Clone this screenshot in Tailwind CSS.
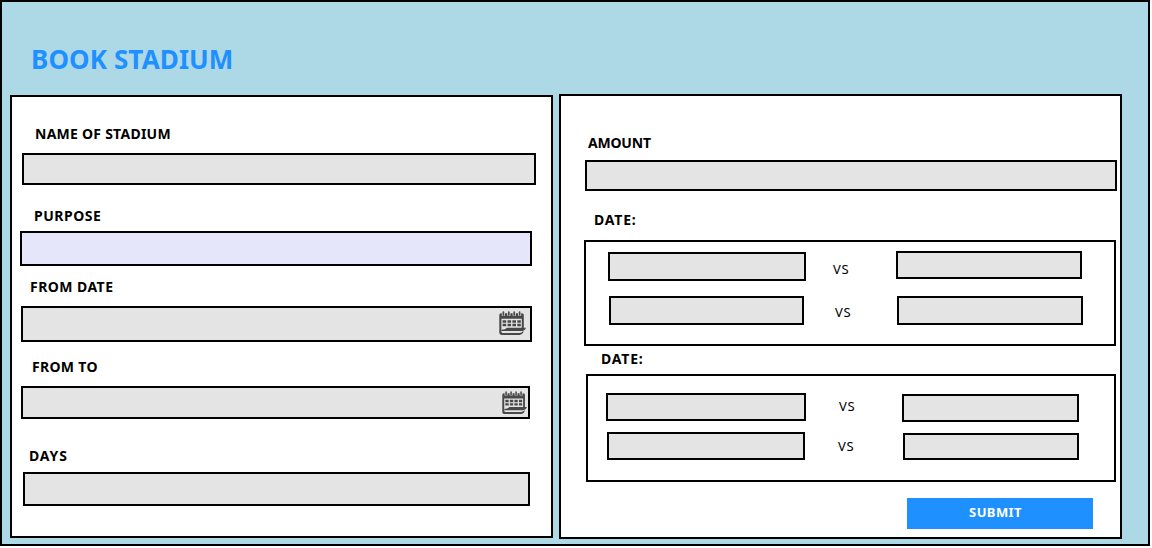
<!DOCTYPE html>
<html lang="en">
<head>
<meta charset="utf-8">
<title>Book Stadium</title>
<script src="https://cdn.jsdelivr.net/npm/@tailwindcss/browser@4"></script>
</head>
<body class="bg-white overflow-hidden font-['Noto_Sans',sans-serif] text-black">
<svg class="hidden">
  <symbol id="calendar" viewBox="0 0 27 24" preserveAspectRatio="none">
    <path fill="#484848" fill-rule="evenodd" d="M2 2.3H23Q24.8 2.3 24.8 4V17.5H22.8V7.8H2.4V20.5Q2.4 22 4 22H20.5Q22.8 22 24.3 19.8V21.6Q23 24 20.5 24H3Q.3 24 .3 21.3V4Q.3 2.3 2 2.3Z"/>
    <path stroke="#e4e4e4" stroke-width="3.2" d="M4.4 0V4.8M9.8 0V4.8M15.2 0V4.8M20.6 0V4.8"/>
    <path stroke="#484848" stroke-width="1.7" stroke-linecap="round" d="M4.4 1.2V3.8M9.8 1.2V3.8M15.2 1.2V3.8M20.6 1.2V3.8"/>
    <path fill="#484848" d="M3.6 9.2h3.6v2.5H3.6zM8.5 9.2h3.6v2.5H8.5zM13.4 9.2H17v2.5h-3.6zM18.3 9.2h3.5v2.5h-3.5zM3.6 12.7h3.6v2.5H3.6zM8.5 12.7h3.6v2.5H8.5zM13.4 12.7H17v2.5h-3.6zM18.3 12.7h3.5v2.5h-3.5zM8 16.8H27Q26 19.8 23 20H2.5V18.8Q6.3 18.8 8 16.8Z"/>
  </symbol>
</svg>
<main class="w-[1150px] h-[546px] border-2 border-black bg-[#add8e6]">
  <h1 class="h-[92px] pt-[37px] pl-[29px] text-[26px] leading-10 tracking-[0.1px] font-bold text-[#1e90ff] whitespace-nowrap">BOOK STADIUM</h1>
  <div class="flex items-start gap-[6px] pl-2">
    <section class="mt-px w-[543px] h-[443px] border-2 border-black bg-white flex flex-col items-start text-sm leading-5 font-bold whitespace-nowrap">
      <label class="mt-[27px] ml-[23px] tracking-[0.25px]">NAME OF STADIUM</label>
      <div class="mt-[9px] ml-[10px] w-[514px] h-8 border-2 border-black bg-[#e4e4e4]"></div>
      <label class="mt-[21px] ml-[22px] tracking-[0.5px]">PURPOSE</label>
      <div class="mt-[5px] ml-2 w-[512px] h-[35px] border-2 border-black bg-[#e6e6fa]"></div>
      <label class="mt-[11px] ml-[18px] tracking-[0.45px]">FROM DATE</label>
      <div class="mt-[9px] ml-[9px] w-[511px] h-9 border-2 border-black bg-[#e4e4e4] flex justify-end pt-[3px] pr-1"><svg class="w-[27px] h-6"><use href="#calendar"/></svg></div>
      <label class="mt-[15px] ml-5 tracking-[0.3px]">FROM TO</label>
      <div class="mt-[9px] ml-[9px] w-[509px] h-[33px] border-2 border-black bg-[#e4e4e4] flex justify-end pt-[3px] pr-px"><svg class="w-[25px] h-[23px]"><use href="#calendar"/></svg></div>
      <label class="mt-[27px] ml-[17px] tracking-[0.9px]">DAYS</label>
      <div class="mt-[6px] ml-[11px] w-[507px] h-[34px] border-2 border-black bg-[#e4e4e4]"></div>
    </section>
    <section class="w-[563px] h-[445px] border-2 border-black bg-white flex flex-col items-start text-sm leading-5 font-bold whitespace-nowrap">
      <label class="mt-[37px] ml-[27px] tracking-[-0.2px]">AMOUNT</label>
      <div class="mt-[7px] ml-6 w-[532px] h-[31px] border-2 border-black bg-[#e4e4e4]"></div>
      <label class="mt-[19px] ml-[33px] tracking-[0.8px]">DATE:</label>
      <div class="mt-[10px] ml-[23px] w-[532px] h-[106px] border-2 border-black text-[13px] leading-5 font-normal tracking-[0.6px]">
        <div class="flex items-start h-[54px] pl-[22px]">
          <div class="mt-[10px] w-[198px] h-[29px] border-2 border-black bg-[#e4e4e4]"></div>
          <span class="mt-[17px] w-[90px] pl-[27px]">VS</span>
          <div class="mt-[9px] w-[186px] h-7 border-2 border-black bg-[#e4e4e4]"></div>
        </div>
        <div class="flex items-start pl-[23px]">
          <div class="w-[195px] h-[29px] border-2 border-black bg-[#e4e4e4]"></div>
          <span class="mt-[6px] w-[93px] pl-[31px]">VS</span>
          <div class="w-[186px] h-[29px] border-2 border-black bg-[#e4e4e4]"></div>
        </div>
      </div>
      <label class="mt-[3px] ml-10 tracking-[0.8px]">DATE:</label>
      <div class="mt-[5px] ml-[25px] w-[530px] h-[108px] border-2 border-black text-[13px] leading-5 font-normal tracking-[0.6px]">
        <div class="flex items-start h-14 pl-[18px]">
          <div class="mt-[17px] w-[200px] h-7 border-2 border-black bg-[#e4e4e4]"></div>
          <span class="mt-5 w-24 pl-[33px]">VS</span>
          <div class="mt-[18px] w-[177px] h-7 border-2 border-black bg-[#e4e4e4]"></div>
        </div>
        <div class="flex items-start pl-[19px]">
          <div class="w-[198px] h-7 border-2 border-black bg-[#e4e4e4]"></div>
          <span class="mt-1 w-[98px] pl-[33px]">VS</span>
          <div class="mt-px w-[176px] h-[27px] border-2 border-black bg-[#e4e4e4]"></div>
        </div>
      </div>
      <button class="mt-4 ml-[346px] w-[186px] h-[31px] bg-[#1e90ff] text-white text-[13px] leading-5 font-bold tracking-[0.4px] pb-1 pr-[9px]">SUBMIT</button>
    </section>
  </div>
</main>
</body>
</html>
